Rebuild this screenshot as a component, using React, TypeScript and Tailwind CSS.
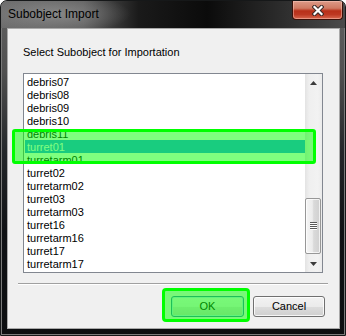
const rows = [
  'debris07',
  'debris08',
  'debris09',
  'debris10',
  'debris11',
  'turret01',
  'turretarm01',
  'turret02',
  'turretarm02',
  'turret03',
  'turretarm03',
  'turret16',
  'turretarm16',
  'turret17',
  'turretarm17',
];

const selected = 'turret01';

function CloseGlyph() {
  return (
    <svg width="12" height="11" viewBox="0 0 12 11">
      <path d="M2.5 2 L9.5 9 M9.5 2 L2.5 9" stroke="#3a2a28" strokeWidth="4.2" strokeLinecap="square" />
      <path d="M2.5 2 L9.5 9 M9.5 2 L2.5 9" stroke="#ffffff" strokeWidth="2.2" strokeLinecap="square" />
    </svg>
  );
}

function Arrow({ down }: { down?: boolean }) {
  return (
    <svg width="7" height="4" viewBox="0 0 7 4">
      <path d={down ? 'M0 0 L7 0 L3.5 4 Z' : 'M0 4 L7 4 L3.5 0 Z'} fill="#3c3c3c" />
    </svg>
  );
}

function Scrollbar() {
  return (
    <div className="flex w-[17px] flex-col bg-[linear-gradient(to_right,#e3e3e3,#efefef_25%,#f2f2f2_75%,#ebebeb)]">
      <div className="flex h-[17px] items-center justify-center pt-[1px]">
        <Arrow />
      </div>
      <div className="flex flex-1 flex-col">
        <div className="flex-1" />
        <div className="mb-px mr-px flex h-[56px] items-center justify-center rounded-[2px] border border-[#979797] bg-[linear-gradient(to_right,#f5f5f5,#ececec_45%,#dadada_55%,#d0d0d0)] shadow-[inset_0_0_0_1px_rgba(255,255,255,0.7)]">
          <div className="flex w-[7px] flex-col">
            <div className="h-[2px] border-t border-b border-t-[#5a5a5a] border-b-[#ffffff]" />
            <div className="h-[2px] border-t border-b border-t-[#5a5a5a] border-b-[#ffffff]" />
            <div className="h-[2px] border-t border-b border-t-[#5a5a5a] border-b-[#ffffff]" />
            <div className="h-[2px] border-t border-b border-t-[#5a5a5a] border-b-[#ffffff]" />
          </div>
        </div>
      </div>
      <div className="flex h-[17px] items-center justify-center">
        <Arrow down />
      </div>
    </div>
  );
}

function Button({ label, primary }: { label: string; primary?: boolean }) {
  return (
    <div
      className={
        'flex h-[21px] items-center justify-center rounded-[3px] border text-[11px] text-black ' +
        (primary
          ? 'w-[73px] border-[#3c7fb1] bg-[linear-gradient(to_bottom,#f2f2f2,#ebebeb_50%,#dddddd_50%,#cfcfcf)] shadow-[inset_0_0_0_1px_#bfe6f9]'
          : 'w-[72px] border-[#707070] bg-[linear-gradient(to_bottom,#f2f2f2,#ebebeb_50%,#dddddd_50%,#cfcfcf)] shadow-[inset_0_0_0_1px_rgba(255,255,255,0.8)]')
      }
    >
      {label}
    </div>
  );
}

export default function App() {
  return (
    <div className="relative flex h-[336px] w-[346px] flex-col overflow-hidden rounded-t-[7px] border border-[#161819] bg-[linear-gradient(to_bottom,#626262_0px,#505050_70px,#24272a_150px,#101215_230px,#0c0e10)] font-['Liberation_Sans',Arial,sans-serif] shadow-[inset_0_0_0_1px_#7a7a7a]">
      <div className="flex h-[27px] items-start justify-between bg-[linear-gradient(to_right,#6c6c6c_0%,#5e5e5e_24%,#1a1a1a_40%,#0b0b0b_60%,#2a2a2a_80%,#4a4a4a_100%)]">
        <div className="h-full w-[130px] bg-[radial-gradient(ellipse_75px_20px_at_55px_13px,rgba(150,150,150,0.7),transparent)] pl-[7px] pt-[6px] text-[12px] leading-[14px] text-black">
          Subobject Import
        </div>
        <div className="mr-[2px] flex h-[19px] w-[51px] items-center justify-center rounded-b-[4px] border border-t-0 border-[#3a1008] bg-[linear-gradient(to_bottom,#dc9a88_0%,#cf7a63_40%,#b83019_55%,#bd3822_75%,#d8684f_100%)] shadow-[inset_0_0_0_1px_rgba(255,210,200,0.45)]">
          <CloseGlyph />
        </div>
      </div>

      <div className="flex-1 pb-[6px] pl-[6px] pr-[5px]">
        <div className="flex h-full flex-col border border-[#a9a9a9] bg-[#f0f0f0]">
          <div className="ml-[15px] mt-[17px] text-[11px] leading-[13px] text-black">
            Select Subobject for Importation
          </div>

          <div className="ml-[15px] mt-[14px] flex h-[200px] w-[300px] border border-[#828790] bg-white">
            <div className="ml-px flex flex-1 flex-col pt-px">
              {rows.map((name) => (
                <div
                  key={name}
                  className={
                    'h-[13px] pl-[2px] text-[11px] leading-[15px] ' +
                    (name === selected ? 'bg-[#3399ff] text-white' : 'text-black')
                  }
                >
                  {name}
                </div>
              ))}
            </div>
            <Scrollbar />
          </div>

          <div className="ml-[10px] mt-[10px] w-[310px] border-t border-b border-t-[#a0a0a0] border-b-[#ffffff]" />

          <div className="mr-[14px] mt-[11px] flex justify-end gap-[9px]">
            <Button label="OK" primary />
            <Button label="Cancel" />
          </div>
        </div>
      </div>

      <div className="absolute left-[11px] top-[128px] h-[35px] w-[304px] rounded-[3px] border-[3px] border-[#00ff00] bg-[#00ff00]/50" />
      <div className="absolute left-[161px] top-[287px] h-[34px] w-[88px] rounded-[4px] border-[3px] border-[#00ff00] bg-[#00ff00]/50" />
    </div>
  );
}
